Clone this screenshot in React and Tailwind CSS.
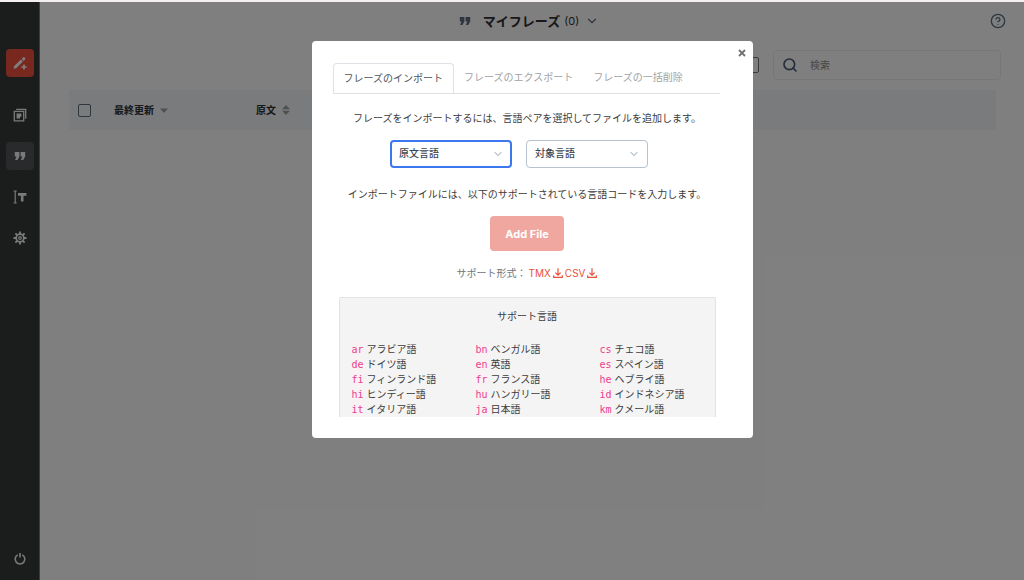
import React from 'react';
import { ChevronDown, Search, CircleHelp } from 'lucide-react';

const languages = [
  ['ar', 'アラビア語'],
  ['bn', 'ベンガル語'],
  ['cs', 'チェコ語'],
  ['de', 'ドイツ語'],
  ['en', '英語'],
  ['es', 'スペイン語'],
  ['fi', 'フィンランド語'],
  ['fr', 'フランス語'],
  ['he', 'ヘブライ語'],
  ['hi', 'ヒンディー語'],
  ['hu', 'ハンガリー語'],
  ['id', 'インドネシア語'],
  ['it', 'イタリア語'],
  ['ja', '日本語'],
  ['km', 'クメール語'],
];

const QuoteIcon = ({ className = '' }) => (
  <svg viewBox="0 0 12 10" fill="currentColor" className={className} aria-hidden="true">
    <path d="M0.8 1h4.6v4.4L3.4 9H1.1L2.5 5.6H0.8zM6.6 1h4.6v4.4L9.2 9H6.9l1.4-3.4H6.6z" />
  </svg>
);

const PencilPlusIcon = () => (
  <svg viewBox="0 0 14 14" fill="currentColor" className="size-3.5" aria-hidden="true">
    <path d="M1 10.2 7.9 3.6 9.9 5.6 3.2 12.2 0.6 12.8zM8.7 2.9 10 1.6Q10.8 0.8 11.6 1.6L12 2Q12.7 2.8 12 3.6L10.7 4.9z" />
    <path d="M10.2 8.4h1.6v1.8h1.8v1.6h-1.8v1.8h-1.6v-1.8H8.4v-1.6h1.8z" />
  </svg>
);

const PagesIcon = () => (
  <svg viewBox="0 0 14 14" fill="none" stroke="currentColor" strokeWidth="1.3" className="size-3.5" aria-hidden="true">
    <path d="M3.2 1.3H12.7V10.8" />
    <path d="M1.3 3.4H10.7V12.8H1.3z" />
    <path d="M3.6 5.4H8.4V8.8H7V10.6H3.6z" fill="currentColor" stroke="none" />
  </svg>
);

const TextCursorIcon = () => (
  <svg viewBox="0 0 14 14" fill="none" stroke="currentColor" className="size-3.5" aria-hidden="true">
    <path d="M0.6 1H3.8M2.2 1V13M0.6 13H3.8" strokeWidth="1.2" />
    <path d="M5 4.4H13.4M9.2 4.4V11.6" strokeWidth="2.6" />
  </svg>
);

const GearIcon = () => (
  <svg viewBox="0 0 14 14" fill="none" stroke="currentColor" className="size-3.5" aria-hidden="true">
    <circle cx="7" cy="7" r="3.8" strokeWidth="1.7" />
    <circle cx="7" cy="7" r="1.3" strokeWidth="1.2" />
    <path
      d="M7 0.5V3M7 11V13.5M0.5 7H3M11 7H13.5M2.4 2.4 4.2 4.2M9.8 9.8 11.6 11.6M2.4 11.6 4.2 9.8M9.8 4.2 11.6 2.4"
      strokeWidth="1.9"
    />
  </svg>
);

const PowerIcon = () => (
  <svg viewBox="0 0 14 14" fill="none" stroke="currentColor" strokeWidth="1.6" className="size-3.5" aria-hidden="true">
    <path d="M4.8 2.9A4.8 4.8 0 1 0 9.2 2.9M7 1V5.6" />
  </svg>
);

const DownloadIcon = () => (
  <svg viewBox="0 0 10 10" fill="none" stroke="currentColor" strokeWidth="1.2" className="size-2.5" aria-hidden="true">
    <path d="M5 0.2V7M2.4 4.6 5 7.1 7.6 4.6M0.7 7.2V9.3H9.3V7.2" />
  </svg>
);

const SortIcon = ({ both = false }) => (
  <svg viewBox="0 0 8 10" fill="currentColor" className="h-2.5 w-2 text-[#a0a0a0]" aria-hidden="true">
    {both ? <path d="M4 0 8 4.2H0zM4 10 0 5.8H8z" /> : <path d="M0 3.4H8L4 8z" />}
  </svg>
);

const SideButton = ({ label, className = '', children }) => (
  <button
    type="button"
    aria-label={label}
    className={`flex size-7 items-center justify-center rounded ${className}`}
  >
    {children}
  </button>
);

const Sidebar = () => (
  <nav className="flex w-10 shrink-0 flex-col items-center border-r border-[#7a7a7a] bg-[#363a38] pt-[47px] pb-[7px] text-[#f4f4f4]">
    <SideButton label="翻訳" className="mb-6 bg-[#f0503c] text-white">
      <PencilPlusIcon />
    </SideButton>
    <div className="flex flex-col gap-[13px]">
      <SideButton label="ドキュメント">
        <PagesIcon />
      </SideButton>
      <SideButton label="フレーズ" className="bg-[#525456]">
        <QuoteIcon className="h-2.5 w-3" />
      </SideButton>
      <SideButton label="テキスト">
        <TextCursorIcon />
      </SideButton>
      <SideButton label="設定">
        <GearIcon />
      </SideButton>
    </div>
    <SideButton label="ログアウト" className="mt-auto">
      <PowerIcon />
    </SideButton>
  </nav>
);

const Header = () => (
  <header className="grid h-[38px] grid-cols-[1fr_auto_1fr] items-center pr-[18px] pl-3">
    <span />
    <div className="flex items-center">
      <QuoteIcon className="mr-3 h-2.5 w-3 text-[#5c6d80]" />
      <h1 className="text-[13px] leading-5 font-bold text-[#303030]">マイフレーズ</h1>
      <span className="ml-1 text-[11px] leading-5 text-[#303030]">(0)</span>
      <ChevronDown className="ml-1.5 size-3.5 text-[#5c6d80]" />
    </div>
    <button type="button" aria-label="ヘルプ" className="justify-self-end text-[#5c6d80]">
      <CircleHelp className="size-4" />
    </button>
  </header>
);

const Toolbar = () => (
  <div className="flex items-center justify-end gap-3.5 pt-2.5 pr-[23px]">
    <button
      type="button"
      aria-label="言語"
      className="flex h-4 w-16 items-center justify-end rounded-xs border border-[#707478] pr-1 text-[#5c6d80]"
    >
      <ChevronDown className="size-2" />
    </button>
    <label className="flex h-[30px] w-[228px] items-center gap-3 rounded border border-[#eceff2] px-2">
      <Search className="size-4 shrink-0 text-[#4a5f78]" strokeWidth={2.5} />
      <input
        type="search"
        aria-label="検索"
        placeholder="検索"
        className="w-full min-w-0 bg-transparent text-[10px] leading-4 outline-none placeholder:text-[#8a8d90]"
      />
    </label>
  </div>
);

const PhraseTable = () => (
  <div className="pt-2.5 pr-7 pl-[29px]">
    <table className="w-full table-fixed text-left text-[10px] leading-4 text-[#303030]">
      <thead className="bg-[#f4f7fa]">
        <tr className="h-10">
          <th className="w-[45px] pl-[9px]">
            <input
              type="checkbox"
              aria-label="すべて選択"
              className="block size-[13px] appearance-none rounded-xs border border-[#5c6d80]"
            />
          </th>
          <th className="w-[142px]">
            <span className="flex items-center gap-1.5">
              最終更新 <SortIcon />
            </span>
          </th>
          <th>
            <span className="flex items-center gap-1.5">
              原文 <SortIcon both />
            </span>
          </th>
        </tr>
      </thead>
    </table>
  </div>
);

const LanguageSelect = ({ label, active = false }) => (
  <div className="grid h-7 w-[122px] items-center">
    <select
      aria-label={label}
      className={`col-start-1 row-start-1 size-full appearance-none rounded bg-white pb-0.5 text-[10px] leading-4 font-medium text-[#3c4652] outline-none ${
        active ? 'border-2 border-[#3b78f0] px-[7px]' : 'border border-[#b6c2ce] px-2'
      }`}
    >
      <option>{label}</option>
    </select>
    <ChevronDown className="pointer-events-none col-start-1 row-start-1 mr-2 size-3 justify-self-end text-[#8a9bab]" />
  </div>
);

const Tab = ({ active = false, children }) => (
  <button
    type="button"
    role="tab"
    aria-selected={active}
    className={`h-[30px] px-2.5 pb-0.5 text-[10px] leading-4 ${
      active
        ? '-mb-px rounded-t border border-b-0 border-[#dee2e6] bg-white text-[#4d555e]'
        : 'text-[#a0a3a6]'
    }`}
  >
    {children}
  </button>
);

const DownloadLink = ({ children }) => (
  <a href="#" className="flex items-center gap-0.5 text-[#e8503c]">
    {children}
    <DownloadIcon />
  </a>
);

const ImportDialog = () => (
  <div
    role="dialog"
    aria-label="フレーズのインポート"
    className="w-[441px] rounded bg-white px-[21px] pb-[21px] text-[10px] leading-4 text-[#3c3c3c]"
  >
    <div className="-mr-4 flex h-[22px] items-center justify-end pt-0.5">
      <button type="button" aria-label="閉じる" className="flex size-3 items-center justify-center text-[#707070]">
        <svg viewBox="0 0 8 8" fill="none" stroke="currentColor" strokeWidth="1.8" className="size-2">
          <path d="M1 1 7 7M7 1 1 7" />
        </svg>
      </button>
    </div>
    <div role="tablist" className="mr-3 flex border-b border-[#dee2e6]">
      <Tab active>フレーズのインポート</Tab>
      <Tab>フレーズのエクスポート</Tab>
      <Tab>フレーズの一括削除</Tab>
    </div>
    <div className="mr-2.5 flex flex-col items-center pt-4">
      <p>フレーズをインポートするには、言語ペアを選択してファイルを追加します。</p>
      <div className="mt-3.5 mr-4 flex gap-3.5">
        <LanguageSelect label="原文言語" active />
        <LanguageSelect label="対象言語" />
      </div>
      <p className="mt-[18px]">インポートファイルには、以下のサポートされている言語コードを入力します。</p>
      <button
        type="button"
        className="mt-3.5 h-[35px] rounded bg-[#efa79f] px-[15px] text-[11px] leading-4 font-bold text-white"
      >
        Add File
      </button>
      <div className="mt-3.5 flex gap-0.5">
        <span className="text-[#6c7680]">サポート形式：</span>
        <DownloadLink>TMX</DownloadLink>
        <DownloadLink>CSV</DownloadLink>
      </div>
    </div>
    <div className="mt-4 mr-4 ml-1.5 rounded-t-xs border border-b-0 border-[#e2e2e2] bg-[#f4f4f4] px-3 pt-2.5">
      <p className="text-center">サポート言語</p>
      <ul className="mt-[18px] grid grid-cols-[124px_124px_1fr] leading-[15px]">
        {languages.map(([code, name]) => (
          <li key={code} className="flex h-[15px] gap-[3px]">
            <code className="bg-[#f9f2f4] font-['DejaVu_Sans_Mono',monospace] text-[#e83e8c]">{code}</code>
            {name}
          </li>
        ))}
      </ul>
    </div>
  </div>
);

export default function App() {
  return (
    <div className="flex min-h-screen flex-col bg-[#f4f0f0] pt-0.5 font-['Inter','Noto_Sans_CJK_JP',sans-serif]">
      <div className="relative flex flex-1 bg-white">
        <Sidebar />
        <main className="min-w-0 flex-1">
          <Header />
          <Toolbar />
          <PhraseTable />
        </main>
        <div className="absolute inset-0 flex items-start justify-center bg-black/50 pt-[39px] pl-10">
          <ImportDialog />
        </div>
      </div>
    </div>
  );
}
